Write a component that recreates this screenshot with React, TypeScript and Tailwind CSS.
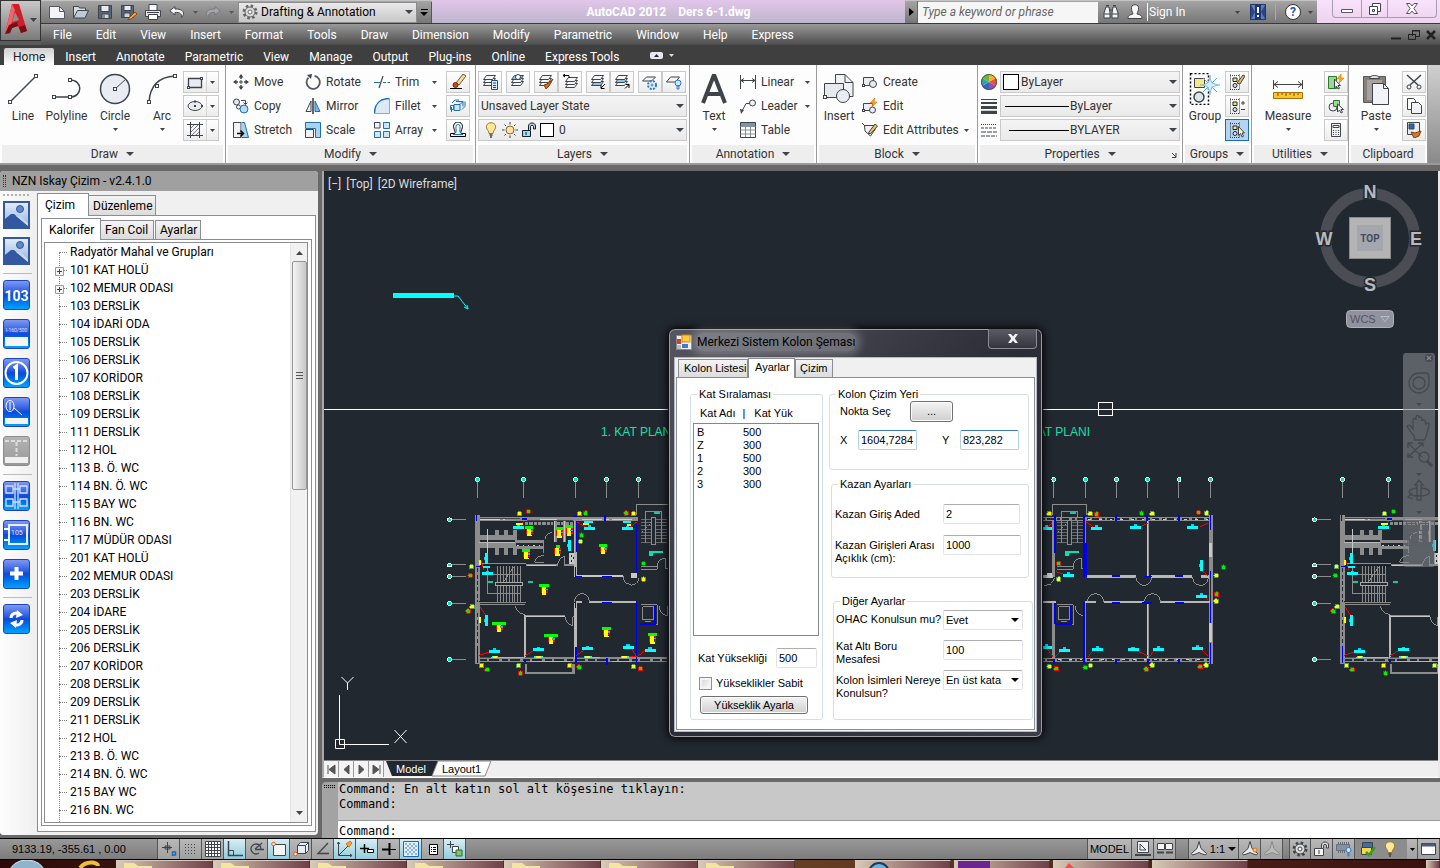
import React, { useState } from 'react'
import type { ReactNode } from 'react'
import clsx from 'clsx'

const menus = ['File', 'Edit', 'View', 'Insert', 'Format', 'Tools', 'Draw', 'Dimension', 'Modify', 'Parametric', 'Window', 'Help', 'Express']
const ribbonTabs = ['Home', 'Insert', 'Annotate', 'Parametric', 'View', 'Manage', 'Output', 'Plug-ins', 'Online', 'Express Tools']

const rooms = [
  'Radyatör Mahal ve Grupları', '101 KAT HOLÜ', '102 MEMUR ODASI', '103 DERSLİK', '104 İDARİ ODA', '105 DERSLİK',
  '106 DERSLİK', '107 KORİDOR', '108 DERSLİK', '109 DERSLİK', '111 DERSLİK', '112 HOL', '113 B. Ö. WC', '114 BN. Ö. WC',
  '115 BAY WC', '116 BN. WC', '117 MÜDÜR ODASI', '201 KAT HOLÜ', '202 MEMUR ODASI', '203 DERSLİK', '204 İDARE',
  '205 DERSLİK', '206 DERSLİK', '207 KORİDOR', '208 DERSLİK', '209 DERSLİK', '211 DERSLİK', '212 HOL', '213 B. Ö. WC',
  '214 BN. Ö. WC', '215 BAY WC', '216 BN. WC',
]

const floors = [
  { name: 'B', height: 500 },
  { name: 'Z', height: 300 },
  { name: '1', height: 500 },
  { name: '2', height: 300 },
  { name: '3', height: 300 },
]

type Kids = { children?: ReactNode }

/* ---------- small drawing helpers ---------- */

function Icon({ w = 16, h = 16, children }: Kids & { w?: number; h?: number }) {
  return (
    <svg width={w} height={h} viewBox={`0 0 ${w} ${h}`} fill="none" stroke="#3f444b" className="shrink-0" aria-hidden="true">
      {children}
    </svg>
  )
}

function Caret({ big, color = '#3f444b' }: { big?: boolean; color?: string }) {
  return big ? (
    <svg width="8" height="4" className="shrink-0" aria-hidden="true"><path d="M0 0h8L4 4z" fill={color} /></svg>
  ) : (
    <svg width="5" height="3" className="shrink-0" aria-hidden="true"><path d="M0 0h5L2.5 3z" fill={color} /></svg>
  )
}

/* ---------- title bar ---------- */

function QuickAccess() {
  return (
    <div className="flex h-full w-[391px] shrink-0 items-center border-t border-[#c4c4c4] bg-linear-to-b from-[#a4a4a4] to-[#777] pl-2">
      <div className="flex items-center gap-2">
        <button aria-label="New"><Icon><path d="M.5 2.500h10l5 5v7H.5z" fill="#f4f4f6" stroke="#55585e" /><path d="M10.500 2.500v5h5" stroke="#55585e" /></Icon></button>
        <button aria-label="Open"><Icon><path d="M.5 14V2.500h5l1 1.500h6v3" fill="#d8dbe2" /><path d="M.5 14l4-7.500h11L12 14z" fill="#c2c9d6" /></Icon></button>
        <button aria-label="Save"><Icon><path d="M1.500 1.500h13v13h-13z" fill="#59637a" /><path d="M4 1.500h8v6H4z" fill="#e8ebf2" /><path d="M5 10h7v4.500H5z" fill="#cfd3dc" /><path d="M7 11v3" /></Icon></button>
        <button aria-label="Save As"><Icon><path d="M.5 1.500h12v12H.5z" fill="#59637a" /><path d="M3 1.500h7v5H3z" fill="#e8ebf2" /><path d="M3 9h6v4.500H3z" fill="#cfd3dc" /><path d="M8 14l6-6 2 2-6 5-3 1z" fill="#f0a83c" stroke="#8a4b10" /></Icon></button>
        <button aria-label="Plot"><Icon><path d="M4 6V.5h8V6" fill="#fff" /><path d="M.5 6.500h15v6H.5z" fill="#e6e6ea" /><path d="M3.500 10.500h9v5h-9z" fill="#fff" /><path d="M2 8.500h12" /></Icon></button>
        <button aria-label="Undo"><Icon><path d="M6 2.500L.8 6.800 6 11V8.500c5-.5 7 1.500 6.500 5 4-4 2-9-6.500-8.500z" fill="#f4f4f6" stroke="#44474d" /></Icon></button>
      </div>
      <span className="ml-2"><Caret color="#55575b" /></span>
      <button aria-label="Redo" className="ml-[7px]"><Icon><path d="M10 2.500l5.200 4.300L10 11V8.500c-5-.5-7 1.500-6.500 5-4-4-2-9 6.500-8.500z" fill="#a6a6a8" stroke="#77797d" /></Icon></button>
      <span className="ml-2"><Caret color="#55575b" /></span>
      <button className="ml-1 flex h-[21px] w-[180px] items-center gap-[3px] border border-[#8d8d8d] bg-linear-to-b from-[#e9e9e9] to-[#c8c8c8] px-[3px]">
        <Icon>
          <circle cx="8" cy="8" r="6" stroke="#666" strokeWidth="3" strokeDasharray="2.400 2.300" />
          <circle cx="8" cy="8" r="5" fill="#ddd" stroke="#666" />
          <circle cx="8" cy="8" r="2" fill="#fff" stroke="#666" />
        </Icon>
        <span className="flex-1 text-left">Drafting &amp; Annotation</span>
        <Caret big />
      </button>
      <button aria-label="Customize" className="flex h-[21px] w-[15px] flex-col items-center justify-center gap-[2px] border-r border-[#555]">
        <span className="h-px w-[7px] bg-black" />
        <Caret big color="#000" />
      </button>
    </div>
  )
}

function InfoCenter() {
  return (
    <div className="flex h-full w-[412px] shrink-0 items-center border-t border-[#c4c4c4] bg-linear-to-b from-[#a4a4a4] to-[#777]">
      <button aria-label="Collapse" className="flex h-full w-[13px] shrink-0 items-center justify-center border-r border-[#666]">
        <svg width="5" height="8"><path d="M0 0v8l5-4z" fill="#000" /></svg>
      </button>
      <input
        aria-label="Search"
        placeholder="Type a keyword or phrase"
        className="h-[21px] w-[180px] shrink-0 bg-[#f6f6f6] px-1 italic outline-none placeholder:text-[#666]"
      />
      <button aria-label="Find" className="ml-[5px]">
        <Icon>
          <path d="M1 14V9l2-6h3l1 6v5zM9 14V9l1-6h3l2 6v5z" fill="#f2f2f2" />
          <path d="M6.500 6h3M1 10h6M9 10h6M3 1.500h3M10 1.500h3" />
        </Icon>
      </button>
      <button aria-label="Account" className="ml-2">
        <Icon><path d="M8 .7c3 0 4 2 3.500 4.800C11 8 10 9 10 10c4 1 5 2 5 4.500H1C1 12 2 11 6 10c0-1-1-2-1.500-4.500C4 2.700 5 .7 8 .7z" fill="#f6f6f6" /></Icon>
      </button>
      <button className="ml-1 border-l border-white pl-px whitespace-nowrap text-white">Sign In</button>
      <span className="ml-auto"><Caret color="#3f444b" /></span>
      <button aria-label="Exchange" className="ml-[10px]">
        <Icon><path d="M.5 .5h15v15H.5z" fill="#5b7fc8" stroke="#27365e" /><path d="M1 1l4 7-4 7M15 1l-4 7 4 7" fill="#2b4688" stroke="none" /><path d="M5 1h6v14H5z" fill="#20356e" stroke="none" /><path d="M7 3h2v6H7zM7 11h2v2H7z" fill="#fff" stroke="none" /></Icon>
      </button>
      <span className="mx-[9px] h-4 w-px bg-[#aaa]" />
      <button aria-label="Help" className="flex size-4 shrink-0 items-center justify-center rounded-full border border-[#333] bg-white text-[12px] font-bold text-[#2455a8]">?</button>
      <span className="mr-1 ml-[7px]"><Caret color="#3f444b" /></span>
    </div>
  )
}

function TitleBar() {
  return (
    <div className="flex h-6 border-b border-[#3a3a3a]">
      <QuickAccess />
      <div className="flex min-w-0 flex-1 items-center justify-center gap-3 overflow-hidden bg-linear-to-b from-[#e2c6ea] to-[#bdb5cd] font-bold whitespace-nowrap text-white">
        <span>AutoCAD 2012</span>
        <span>Ders 6-1.dwg</span>
      </div>
      <InfoCenter />
      <div className="flex w-[123px] shrink-0 justify-end bg-linear-to-b from-[#f9e2fb] to-[#ecd3ee] pr-[3px]">
        <div className="flex h-[18px] divide-x divide-[#a79bb0] rounded-b-[4px] border-x border-b border-[#a79bb0]">
          <button aria-label="Minimize" className="flex w-[29px] items-center justify-center"><Icon w={14} h={12}><path d="M1.500 6.500h11v3h-11z" fill="#fff" stroke="#55566a" /></Icon></button>
          <button aria-label="Restore" className="flex w-[26px] items-center justify-center"><Icon w={12} h={12}><path d="M3.500 .5h8v8h-8z" fill="#fff" /><path d="M.5 3.500h8v8h-8z" fill="#fff" /><path d="M3.500 6.500h2v2h-2z" /></Icon></button>
          <button aria-label="Close" className="flex w-12 items-center justify-center"><Icon w={12} h={11}><path d="M.5 .5h3.500l2 2.500 2-2.500h3.500l-3.600 5 3.600 5H8l-2-2.500-2 2.500H.5l3.600-5z" fill="#fff" stroke="#55566a" /></Icon></button>
        </div>
      </div>
    </div>
  )
}

function Header() {
  return (
    <header className="flex bg-[#5a5a5a]">
      <button aria-label="Application menu" className="h-[41px] w-[41px] shrink-0 border border-[#333] bg-linear-to-b from-[#c9c9c9] to-[#7b7b7b]">
        <svg width="39" height="39" viewBox="0 0 39 39" aria-hidden="true">
          <path d="M4 33L11 3h7l8 27-6 2-3-7-6 2-2 5z" fill="#cf1e28" />
          <path d="M11 21l3-10 4 8z" fill="#8d8d8d" />
          <path d="M11 3L4 33l4-2 6-22z" fill="#f2636a" />
          <path d="M4 33l5-1 2-5 6-2-1-4-8 3zM20 32l6-2-2-6-6 2z" fill="#7a0c14" />
          <path d="M29 17h7l-3.500 4z" fill="#3f444b" />
        </svg>
      </button>
      <div className="min-w-0 flex-1">
        <TitleBar />
        <div className="flex h-[21px] items-center bg-linear-to-b from-[#9a9a9a] to-[#4d4d4d] pr-1 pl-3 text-white">
          <nav className="flex gap-6">
            {menus.map((m) => <button key={m}>{m}</button>)}
          </nav>
          <div className="ml-auto flex gap-[6px]">
            <button aria-label="Minimize drawing"><Icon w={12} h={12}><path d="M1 9.500h10" stroke="#222" strokeWidth="2" /></Icon></button>
            <button aria-label="Restore drawing"><Icon w={12} h={12}><path d="M4.500 7V1.500h7v6H8M.5 5.500h7v5h-7z" stroke="#222" /><path d="M4 2h8M0 5.500h8" stroke="#222" /></Icon></button>
            <button aria-label="Close drawing"><Icon w={10} h={12}><path d="M1 2l8 8M9 2l-8 8" stroke="#222" strokeWidth="2.500" /></Icon></button>
          </div>
        </div>
      </div>
    </header>
  )
}

/* ---------- ribbon ---------- */

function Panel({ title, width, arrow = true, launcher, children }: Kids & { title: string; width: string; arrow?: boolean; launcher?: boolean }) {
  return (
    <section className={clsx('flex shrink-0 flex-col border-r border-[#9a9a9a] px-[2px] text-[#333]', width)}>
      <div className="flex h-20 items-start pt-[5px]">{children}</div>
      <div className="relative flex h-[18px] items-center justify-center gap-2 bg-[#eee]">
        {title}
        {arrow && <Caret big />}
        {launcher && (
          <button aria-label={`${title} settings`} className="absolute right-[3px] bottom-[5px]">
            <Icon w={6} h={6}><path d="M1 1l4 4M5 1v4.500H1" /></Icon>
          </button>
        )}
      </div>
    </section>
  )
}

function BigButton({ label, width, arrow, children }: Kids & { label: string; width: string; arrow?: boolean }) {
  return (
    <button className={clsx('flex shrink-0 flex-col items-center', width)}>
      <span className="flex h-[38px] items-center justify-center">{children}</span>
      <span className="leading-4">{label}</span>
      {arrow && <span className="mt-1"><Caret /></span>}
    </button>
  )
}

function RowButton({ label, arrow, children }: Kids & { label: string; arrow?: boolean }) {
  return (
    <button className="flex h-6 items-center gap-[5px] text-left whitespace-nowrap">
      {children}
      <span className={clsx(arrow && 'flex-1')}>{label}</span>
      {arrow && <Caret />}
    </button>
  )
}

function Stack({ className, children }: Kids & { className?: string }) {
  return <div className={clsx('mt-px flex flex-col gap-[2px]', className)}>{children}</div>
}

function Mini({ label, on, split, children }: Kids & { label: string; on?: boolean; split?: boolean }) {
  return (
    <div className={clsx('flex h-[22px] border', on ? 'border-[#1b6ac0] bg-[#b4d4f2]' : 'border-[#c9c9c9] bg-linear-to-b from-white to-[#ececec]')}>
      <button aria-label={label} className="flex w-[22px] items-center justify-center">{children}</button>
      {split && <button aria-label={`${label} options`} className="flex w-3 items-center justify-center border-l border-[#d4d4d4]"><Caret /></button>}
    </div>
  )
}

function Combo({ label, value, pad, width, children }: Kids & { label: string; value: string; pad: string; width: string }) {
  return (
    <div className={clsx('relative h-[22px] border border-[#c9c9c9] bg-linear-to-b from-[#f4f4f4] to-[#eaeaea]', width)}>
      <select aria-label={label} className={clsx('h-full w-full appearance-none outline-none', pad)}>
        <option>{value}</option>
      </select>
      <span className="pointer-events-none absolute inset-y-0 left-1 flex items-center gap-[3px]">{children}</span>
      <span className="pointer-events-none absolute top-2 right-[2px]"><Caret big /></span>
    </div>
  )
}

const node = { fill: '#fff', stroke: '#3f444b' }

function DrawPanel() {
  return (
    <Panel title="Draw" width="w-[226px]">
      <BigButton label="Line" width="w-[42px]">
        <Icon w={32} h={32}><path d="M3 29L29 3" strokeWidth="1.500" /><rect x="1.500" y="27.500" width="3" height="3" {...node} /><rect x="27.500" y="1.500" width="3" height="3" {...node} /></Icon>
      </BigButton>
      <BigButton label="Polyline" width="w-[45px]">
        <Icon w={32} h={32}><path d="M3 24h16c13 0 13-17 0-17" strokeWidth="1.500" /><rect x="1.500" y="22.500" width="3" height="3" {...node} /><rect x="17.500" y="22.500" width="3" height="3" {...node} /><rect x="17.500" y="5.500" width="3" height="3" {...node} /></Icon>
      </BigButton>
      <BigButton label="Circle" width="w-[52px]" arrow>
        <Icon w={32} h={32}><circle cx="16" cy="16" r="14.500" fill="#e9edf3" strokeWidth="1.500" /><path d="M16 16L27 6" /><rect x="14.500" y="14.500" width="3" height="3" {...node} /></Icon>
      </BigButton>
      <BigButton label="Arc" width="w-[42px]" arrow>
        <Icon w={32} h={32}><path d="M3 29C4 13 12 4 29 3" strokeWidth="1.500" /><rect x="1.500" y="27.500" width="3" height="3" {...node} /><rect x="9.500" y="11.500" width="3" height="3" {...node} /><rect x="27.500" y="1.500" width="3" height="3" {...node} /></Icon>
      </BigButton>
      <Stack>
        <Mini label="Rectangle" split><Icon><path d="M1.500 4.500h13v9h-13z" fill="#e9edf3" strokeWidth="1.300" /><rect x=".5" y="12.500" width="2" height="2" {...node} /><rect x="13.500" y="3.500" width="2" height="2" {...node} /></Icon></Mini>
        <Mini label="Ellipse" split><Icon><ellipse cx="8" cy="8" rx="7" ry="4.500" fill="#e9edf3" /><path d="M7 8h2M8 7v2M8 2.500v2M14 8h2" strokeWidth="2" /></Icon></Mini>
        <Mini label="Hatch" split><Icon><path d="M3.500 0v16M12.500 0v16M0 2.500h16M0 13.500h16" /><path d="M4 6l3-3M4 10l7-7M5 13l7-7M9 13l3-3" strokeWidth=".7" /></Icon></Mini>
      </Stack>
    </Panel>
  )
}

function ModifyPanel() {
  const blue = '#1f6fb5'
  return (
    <Panel title="Modify" width="w-[250px]">
      <div className="ml-[5px] w-[72px]">
        <RowButton label="Move"><Icon><path d="M8 1v4M8 11v4M1 8h4M11 8h4" strokeWidth="1.500" /><path d="M5.500 3.500L8 0l2.500 3.500zM5.500 12.500L8 16l2.500-3.500zM3.500 5.500L0 8l3.500 2.500zM12.500 5.500L16 8l-3.500 2.500z" fill="#3f444b" stroke="none" /><path d="M7 7h2v2H7z" fill="#fff" /></Icon></RowButton>
        <RowButton label="Copy"><Icon><circle cx="3.500" cy="4" r="3" fill="#e6e8ee" /><circle cx="5.500" cy="9" r="2" fill="#fff" /><circle cx="11" cy="11" r="4" fill="#b9d9f2" stroke={blue} /><path d="M8 2.500h4.500V6M10.500 4.500l2 2 2-2" /></Icon></RowButton>
        <RowButton label="Stretch"><Icon><path d="M.5 .5H8v15H.5z" fill="#f1f2f5" /><path d="M8.500 .5h3l4 15h-7" fill="#a9d2f0" stroke={blue} /><path d="M4 11.500h6M7.500 8.500l3 3-3 3" strokeWidth="1.500" stroke="#000" /></Icon></RowButton>
      </div>
      <div className="w-[69px]">
        <RowButton label="Rotate"><Icon><path d="M9.500 1.800a6.600 6.600 0 1 1-6 1.800" strokeWidth="1.800" stroke="#55595f" /><path d="M2 1l5-1-1 5z" fill="#3f444b" stroke="none" /></Icon></RowButton>
        <RowButton label="Mirror"><Icon><path d="M6 3v10.500H1z" fill="#f1f2f5" /><path d="M10 3v10.500h5z" fill="#7fb8e6" stroke={blue} /><path d="M8 0v16" strokeWidth="1.200" stroke="#000" /></Icon></RowButton>
        <RowButton label="Scale"><Icon><path d="M.5 .5h15v15h-5v-9h-10z" fill="#a9d2f0" stroke={blue} /><path d="M.5 7.500h8v8h-8z" fill="#f1f2f5" /></Icon></RowButton>
      </div>
      <div className="flex w-[63px] flex-col">
        <RowButton label="Trim" arrow><Icon><path d="M0 8.500h6" stroke={blue} /><path d="M5 14l4-12" strokeWidth="1.200" /><path d="M9 8.500h7" stroke={blue} strokeDasharray="3 1.500" /></Icon></RowButton>
        <RowButton label="Fillet" arrow><Icon><path d="M.5 15.500C.5 6 6 .5 15.500 .5v15z" fill="#dbeaf6" stroke="none" /><path d="M.5 15.500C.5 6 6 .5 15.500 .5" stroke={blue} strokeWidth="1.500" /><path d="M.5 15.500h15V.5" stroke="#9aa" /></Icon></RowButton>
        <RowButton label="Array" arrow><Icon><path d="M.5 .5h5.500v5.500H.5z" fill="#f1f2f5" /><path d="M9.500 .5h6v6h-6zM.5 9.500h6v6h-6zM9.500 9.500h6v6h-6z" fill="#cfe5f6" stroke={blue} /></Icon></RowButton>
      </div>
      <Stack className="ml-[9px]">
        <Mini label="Erase"><Icon><path d="M6 9l7-9 3 2-7 9z" fill="#f0d9a8" stroke="#7a5a2a" /><circle cx="5.500" cy="11" r="2.500" fill="#c8481c" stroke="#7a2a10" /><path d="M0 14.500h12" stroke="#000" /></Icon></Mini>
        <Mini label="Explode"><Icon><path d="M4 6.500h6v6H4zM6 3.500h7v5M10 6.500l3-3" fill="#cfe5f6" stroke={blue} /><path d="M1.500 9v5M12 11.500l3-3v-5M2 5l3-3h4M.5 7.500h3v4h-3z" stroke={blue} /></Icon></Mini>
        <Mini label="Offset"><Icon><path d="M.5 14.500v-3h4c2 0-1-5-1-7a4.500 4.500 0 0 1 9 0c0 2-3 7-1 7h4v3z" stroke="#000" /><path d="M3 12.500h10M5.500 11c1.500-2 0-4 .5-6.500a2 2 0 0 1 4 0C10.500 7 9 9 10.500 11" stroke={blue} /></Icon></Mini>
      </Stack>
    </Panel>
  )
}

function Sheets({ blue }: { blue?: number }) {
  return (
    <>
      {[9.5, 6.5, 3.5].map((y, i) => (
        <path key={y} d={`M1.500 ${y + 2}l3-4h9l-3 4z`} fill={blue === i ? '#8cc4ee' : '#f4f5f7'} />
      ))}
    </>
  )
}

function LayersPanel() {
  return (
    <Panel title="Layers" width="w-[214px]">
      <Stack>
        <div className="flex">
          <div className="mr-1"><Mini label="Layer Properties"><Icon><Sheets /><path d="M9.500 6.500h6v9h-6z" fill="#dcebf8" stroke="#23507a" /><path d="M11 9h3M11 11.500h3M11 13.500h3" /></Icon></Mini></div>
          <div className="mr-1"><Mini label="Make Current"><Icon><Sheets blue={2} /><circle cx="8" cy="3" r="2.500" fill="#fff" /></Icon></Mini></div>
          <Mini label="Match"><Icon><Sheets /><path d="M6 11l3-1 6-5-4 7-3 3z" fill="#c86a22" stroke="#84400f" /></Icon></Mini>
          <div className="mr-1"><Mini label="Previous"><Icon><g transform="translate(2 2)"><Sheets /></g><path d="M7 4V1.500H1M3 0L1 1.500 3 3" stroke="#000" /></Icon></Mini></div>
          <Mini label="Isolate"><Icon><Sheets blue={0} /><path d="M15 10l-4 4M11 11v3.500h3.500" stroke="#000" /></Icon></Mini>
          <div className="mr-1"><Mini label="Unisolate"><Icon><Sheets blue={1} /><path d="M11 14.500l4-4M12 10.500h3V14" stroke="#000" /></Icon></Mini></div>
          <Mini label="Freeze"><Icon><path d="M.5 7l4-4h9l-4 4z" fill="#f4f5f7" /><circle cx="10" cy="11" r="4" stroke="#2a7cc4" strokeWidth="2" strokeDasharray="2 1.200" /><circle cx="10" cy="11" r="1" stroke="#2a7cc4" /></Icon></Mini>
          <Mini label="Off"><Icon><path d="M.5 8l4-5h9l-4 5z" fill="#f4f5f7" /><circle cx="12" cy="9" r="3" fill="#cfe5f6" stroke="#2a7cc4" /><path d="M11 12h2v3h-2z" stroke="#2a7cc4" /></Icon></Mini>
        </div>
        <Combo label="Layer state" value="Unsaved Layer State" pad="pl-[2px]" width="w-[209px]" />
        <Combo label="Layer" value="0" pad="pl-20" width="w-[209px]">
          <Icon><path d="M8 .8c3.500 0 5 2.500 4.500 5C12 8 10 9 10 11.500H6C6 9 4 8 3.500 5.800 3 3.300 4.500 .8 8 .8z" fill="#ffe79a" stroke="#9a7a2a" /><path d="M6.500 13h3M7 15h2" strokeWidth="1.500" /></Icon>
          <Icon><circle cx="8" cy="8" r="4" fill="#ffe0a0" stroke="#8a6a3a" /><path d="M8 0v2.500M8 13.500V16M0 8h2.500M13.500 8H16M2.500 2.500l1.500 1.500M12 12l1.500 1.500M13.500 2.500L12 4M2.500 13.500L4 12" /></Icon>
          <Icon><path d="M1.500 8.500h8v6h-8z" fill="#a9d8f0" stroke="#123" /><path d="M7.500 8V4c0-4 7-4 7 0v3h-2V4.500c0-1.500-3-1.500-3 0V8" fill="#bcd" stroke="#123" /><path d="M5 10v3" stroke="#123" /></Icon>
          <span className="size-[14px] border border-black bg-white" />
        </Combo>
      </Stack>
    </Panel>
  )
}

function AnnotationPanel() {
  return (
    <Panel title="Annotation" width="w-[127px]">
      <BigButton label="Text" width="w-11" arrow>
        <Icon w={28} h={32}><path d="M3 30L13.500 3h1L25 30M7 21h14" strokeWidth="4" /></Icon>
      </BigButton>
      <div className="ml-1 flex w-[70px] flex-col">
        <RowButton label="Linear" arrow><Icon><path d="M.5 1v14M15.500 1v14M1 6.500h14M4 4.500l-3 2 3 2M12 4.500l3 2-3 2" /></Icon></RowButton>
        <RowButton label="Leader" arrow><Icon><circle cx="12.500" cy="5" r="3" fill="#f1f2f5" /><path d="M9 5.500H6L2 13" /><path d="M0 11l4 1-3 4z" fill="#3f444b" stroke="none" /></Icon></RowButton>
        <RowButton label="Table"><Icon><path d="M.5 .5h15v15H.5z" fill="#fff" /><path d="M1 1h14v3H1z" fill="#7b93b5" stroke="none" /><path d="M.5 4.500h15M.5 8h15M.5 12h15M5.500 4v11M10.500 4v11" stroke="#88909a" /></Icon></RowButton>
      </div>
    </Panel>
  )
}

function BlockPanel() {
  return (
    <Panel title="Block" width="w-[161px]">
      <BigButton label="Insert" width="w-[40px]">
        <Icon w={32} h={32}>
          <path d="M12.500 1.500H22l8 8v14H12.500z" fill="#f1f2f5" />
          <path d="M22 1.500v8h8" />
          <path d="M1.500 10.500h19v14h-19z" fill="#e6e9ef" />
          <circle cx="20" cy="23" r="6.500" fill="#e9ecf2" />
          <rect x=".5" y="22.500" width="3" height="3" {...node} />
        </Icon>
      </BigButton>
      <div className="ml-[3px] w-[110px]">
        <RowButton label="Create"><Icon><path d="M1.500 3.500h10v8h-10z" fill="#e9edf3" /><circle cx="11" cy="10" r="3.500" fill="#e9edf3" /><rect x=".5" y="10.500" width="2" height="2" {...node} /></Icon></RowButton>
        <RowButton label="Edit"><Icon><path d="M1.500 5.500h9v7h-9z" fill="#e9edf3" /><circle cx="10.500" cy="12" r="3" fill="#e9edf3" /><rect x=".5" y="11.500" width="2" height="2" {...node} /><path d="M13 0L8 5h3l-1 4 5-5h-3z" fill="#f7a823" stroke="#d9740f" strokeWidth=".6" /></Icon></RowButton>
        <RowButton label="Edit Attributes" arrow><Icon><path d="M0 1l3 3M2.500 3.500H12l1 4-4.500 6.500L3 9z" fill="#f1f2f5" /><path d="M7 10l6-8 2.500 2-6 7-3 1z" fill="#f0c060" /></Icon></RowButton>
      </div>
    </Panel>
  )
}

function PropertiesPanel() {
  return (
    <Panel title="Properties" width="w-[205px]" launcher>
      <div className="ml-px flex w-[19px] flex-col">
        <span className="flex h-6 items-center">
          <Icon>
            <g stroke="none">
              <path d="M8 8V0a8 8 0 0 1 7 4z" fill="#f2b43a" />
              <path d="M8 8l7-4a8 8 0 0 1 0 8z" fill="#e8543a" />
              <path d="M8 8l7 4a8 8 0 0 1-7 4z" fill="#a04ab0" />
              <path d="M8 8v8a8 8 0 0 1-7-4z" fill="#3a62c4" />
              <path d="M8 8l-7 4a8 8 0 0 1 0-8z" fill="#3aa0a8" />
              <path d="M8 8L1 4a8 8 0 0 1 7-4z" fill="#6ab83a" />
            </g>
            <circle cx="8" cy="8" r="7.500" stroke="#555" />
          </Icon>
        </span>
        <span className="flex h-6 items-center"><Icon><path d="M0 1.500h16" /><path d="M0 5h16" strokeWidth="2" /><path d="M0 9.500h16" strokeWidth="3" /><path d="M0 14.500h16" strokeWidth="3.500" /></Icon></span>
        <span className="flex h-6 items-center"><Icon><path d="M0 2.500h16" strokeDasharray="1 1" /><path d="M0 6h16" strokeDasharray="3 1" /><path d="M0 10h16" strokeDasharray="5 1" /><path d="M0 14h16" strokeDasharray="4 1" /></Icon></span>
      </div>
      <Stack>
        <Combo label="Color" value="ByLayer" pad="pl-[20px]" width="w-[180px]"><span className="-ml-[2px] size-4 border border-black bg-white" /></Combo>
        <Combo label="Lineweight" value="ByLayer" pad="pl-[69px]" width="w-[180px]"><span className="h-px w-16 bg-black" /></Combo>
        <Combo label="Linetype" value="BYLAYER" pad="pl-[69px]" width="w-[180px]"><span className="ml-1 h-px w-[60px] bg-black" /></Combo>
      </Stack>
    </Panel>
  )
}

function GroupGlyph() {
  return (
    <>
      <path d="M1.500 .5v15M10.500 .5v15M1 1.500h10M1 15.500h10" strokeDasharray="1 1" />
      <path d="M4 4h4v3.500H4z" fill="#f6e98a" stroke="#222" />
      <circle cx="6" cy="11.500" r="2" fill="#cfe5f6" stroke="#222" />
    </>
  )
}

function RightPanels() {
  return (
    <>
      <Panel title="Groups" width="w-[69px]">
        <BigButton label="Group" width="w-10">
          <Icon w={32} h={32}>
            <path d="M1.500 .5h18v31h-18z" strokeDasharray="2 2" stroke="#000" strokeWidth="1.500" />
            <path d="M5.500 5.500h10v9h-10z" fill="#f6e98a" />
            <circle cx="10" cy="24" r="5" fill="#dfe4ea" strokeWidth="1.500" />
            <path d="M21 2v20M11 12h20M14 5l14 14M28 5L14 19" stroke="#5aa6e0" />
            <path d="M21 5l2 5 6 2-6 2-2 6-2-6-5-2 5-2z" fill="#d8eefc" stroke="#7cc0f0" />
          </Icon>
        </BigButton>
        <Stack>
          <Mini label="Ungroup"><Icon><GroupGlyph /><path d="M8 9l6-8 2 1-5 8z" fill="#e8b85a" /></Icon></Mini>
          <Mini label="Group Edit"><Icon><GroupGlyph /><path d="M12 5h4M14 3v4M12 11.500h4" /></Icon></Mini>
          <Mini label="Group Selection" on><Icon><GroupGlyph /><path d="M9.500 4.500v9l2-2 1.500 3.500 1.500-.7-1.500-3.300h2.500z" fill="#fff7b0" /></Icon></Mini>
        </Stack>
      </Panel>
      <Panel title="Utilities" width="w-[97px]">
        <BigButton label="Measure" width="w-[68px]" arrow>
          <Icon w={32} h={32}>
            <path d="M1.500 7v9M30.500 7v9M2 11.500h28M6 8.500l-4 3 4 3M26 8.500l4 3-4 3" />
            <path d="M1.500 19.500h29v6h-29z" fill="#f7c52c" stroke="#a8700c" />
            <path d="M6 20v3M10 20v2M14 20v3M18 20v2M22 20v3M26 20v2" stroke="#7a5206" />
          </Icon>
        </BigButton>
        <Stack className="ml-[2px]">
          <Mini label="Quick Select"><Icon><path d="M.5 2.500h8v12h-8z" fill="#9fd49a" stroke="#2a7a2a" /><path d="M13 0L9 5h3l-1 4 5-5h-3z" fill="#f7a823" stroke="#d9740f" strokeWidth=".6" /><path d="M6.500 5v9l2-2 1.500 3 1.500-.7L10 11.500h2.500z" fill="#fff" /></Icon></Mini>
          <Mini label="Select All"><Icon><circle cx="5" cy="9" r="4" fill="#eee" /><path d="M5.500 2.500h6v6h-6z" fill="#9fd49a" stroke="#2a7a2a" /><path d="M9.500 6v8l2-2 1.500 3 1.500-.7L13 11.500h2.500z" fill="#fff" /></Icon></Mini>
          <Mini label="Calculator"><Icon><path d="M3.500 1.500h9v13h-9z" fill="#f1f2f5" /><path d="M5 3.500h6v2H5z" fill="#fff" /><path d="M5 8.500h6M5 10.500h6M5 12.500h6" strokeDasharray="1 1.500" /></Icon></Mini>
        </Stack>
      </Panel>
      <Panel title="Clipboard" width="w-[79px]" arrow={false}>
        <BigButton label="Paste" width="w-[50px]" arrow>
          <Icon w={32} h={32}>
            <path d="M3.500 3.500h22v26h-22z" fill="#86807c" stroke="#5a5654" />
            <path d="M7 7h15v20H7z" fill="#a8a29e" stroke="none" />
            <path d="M9.500 5.500c0-4 10-4 10 0z" fill="#e8e8ea" />
            <path d="M12.500 10.500h11l5 5v16h-16z" fill="#f0f3f8" />
            <path d="M23.500 10.500v5h5" />
          </Icon>
        </BigButton>
        <Stack className="ml-px">
          <Mini label="Cut"><Icon><path d="M1 1l11 10M15 1L4 11" strokeWidth="1.500" /><circle cx="3" cy="13" r="2" /><circle cx="13" cy="13" r="2" /></Icon></Mini>
          <Mini label="Copy Clip"><Icon><path d="M1.500 .5h6l2 2v9h-8z" fill="#fff" /><path d="M5.500 4.500h7l3 3v8h-10z" fill="#f1f2f5" /></Icon></Mini>
          <Mini label="Match Properties"><Icon><path d="M1.500 .5h12v12h-12z" fill="#e9edf3" /><path d="M3 2h5v5H3z" fill="#2f69b0" /><path d="M5 10l4 1 6-2-2 5-5 2z" fill="#d9772a" stroke="#84400f" /></Icon></Mini>
        </Stack>
      </Panel>
    </>
  )
}

function Ribbon() {
  const [active, setActive] = useState('Home')
  return (
    <div className="bg-[#3f3f3f]">
      <div className="flex h-5 items-end gap-[2px] pl-1">
        {ribbonTabs.map((t) => (
          <button
            key={t}
            onClick={() => setActive(t)}
            className={clsx('h-[17px] px-[9px] leading-4', t === active ? 'rounded-t-[2px] bg-linear-to-b from-[#cfcfcf] to-white text-[#222]' : 'text-white')}
          >
            {t}
          </button>
        ))}
        <button aria-label="Minimize ribbon" className="mb-[6px] ml-5 flex items-center gap-[6px]">
          <Icon w={13} h={7}><rect width="13" height="7" rx="2" fill="#e8e8f0" stroke="none" /><path d="M4 5h5L6.500 2z" fill="#222" stroke="none" /></Icon>
          <Caret color="#ddd" />
        </button>
      </div>
      <div className="flex overflow-hidden border-b-2 border-[#9a9a9a] bg-[#fdfdfd]">
        <DrawPanel />
        <ModifyPanel />
        <LayersPanel />
        <AnnotationPanel />
        <BlockPanel />
        <PropertiesPanel />
        <RightPanels />
        <div className="flex-1 bg-linear-to-b from-[#d0d0d0] to-[#8a8a8a]" />
      </div>
    </div>
  )
}

/* ---------- side palette ---------- */

function Tile({ label, grey, children }: Kids & { label: string; grey?: boolean }) {
  return (
    <button
      aria-label={label}
      className={clsx(
        'h-[30px] w-[27px] overflow-hidden rounded-[3px] border',
        grey ? 'border-[#8c8c8c] bg-linear-to-b from-[#b4b4b4] to-[#989898]' : 'border-[#1d44b8] bg-linear-to-b from-[#7f97f2] via-[#0f49dc] to-[#00a2ff]',
      )}
    >
      <svg width="25" height="28" viewBox="0 0 25 28" fill="none" stroke="#fff" strokeWidth="2">{children}</svg>
    </button>
  )
}

function Photo({ label }: { label: string }) {
  return (
    <button aria-label={label} className="h-7 w-[27px]">
      <svg width="27" height="28" viewBox="0 0 27 28">
        <defs>
          <linearGradient id="sky" x1="0" y1="0" x2="0" y2="1"><stop offset="0" stopColor="#e4eefa" /><stop offset="1" stopColor="#8fb0dc" /></linearGradient>
        </defs>
        <rect x="1" y="1" width="25" height="26" fill="url(#sky)" stroke="#33589f" strokeWidth="2" />
        <path d="M2 18l6-5h3l6 5 8 7v1H2z" fill="#33589f" />
        <path d="M13 15l4 0 8 7v3z" fill="#c7d8f0" />
        <circle cx="17" cy="8" r="3.500" fill="#5f88c8" stroke="#33589f" />
      </svg>
    </button>
  )
}

function IconStrip() {
  return (
    <div className="flex w-[37px] shrink-0 flex-col bg-linear-to-r from-[#fdfdfd] to-[#efefef] pt-[3px] pl-[3px]">
      <div className="w-[26px] border-t-2 border-dotted border-[#b0b0b0]" />
      <div className="mt-[5px] flex flex-col gap-2">
        <Photo label="Resim 1" />
        <Photo label="Resim 2" />
      </div>
      <hr className="mt-2 w-[29px] border-t border-[#bbb]" />
      <div className="mt-[6px] flex flex-col gap-[9px]">
        <Tile label="103"><text x="12.500" y="20" textAnchor="middle" fill="#fff" stroke="none" fontSize="14" fontWeight="700" fontFamily="Roboto">103</text></Tile>
        <Tile label="160/500"><text x="12.500" y="12" textAnchor="middle" fill="#dbe6ff" stroke="none" fontSize="5" fontFamily="Roboto">I-160/500</text><path d="M1 17h23v9H1z" fill="#f4f4f4" stroke="none" /></Tile>
        <Tile label="Kolon no"><circle cx="12.500" cy="14" r="11" /><path d="M9.500 9l3-2v14" strokeWidth="3" /></Tile>
        <Tile label="Kolon hattı"><ellipse cx="6" cy="8" rx="4" ry="5.500" strokeWidth="1" /><path d="M6 4v8M10 10l8 7" strokeWidth="1" /><path d="M1 20h23v6H1z" fill="#f4f4f4" stroke="none" /></Tile>
        <Tile label="Boru" grey><path d="M1 4h23M12.500 5v14" strokeDasharray="4 2" stroke="#ddd" /><path d="M1 20h23v6H1z" fill="#f0f0f0" stroke="none" /></Tile>
      </div>
      <hr className="mt-2 w-[29px] border-t border-[#bbb]" />
      <div className="mt-[6px] flex flex-col gap-[9px]">
        <Tile label="Şema"><path d="M2 4h7v7H2zM16 4h7v7h-7zM2 17h7v7H2zM16 17h7v7h-7zM11 1v26M14 1v26M9 7h7M9 20h7" strokeWidth="1.300" stroke="#cfe0ff" /></Tile>
        <Tile label="Mahal"><path d="M5 4h18v19H5z" stroke="#e6efff" /><path d="M0 8h5M0 19h5" /><text x="7" y="14" fill="#dbe6ff" stroke="none" fontSize="7" fontFamily="Roboto">105</text></Tile>
        <Tile label="Ekle"><path d="M12.500 7v13M6 13.500h13" strokeWidth="4" /></Tile>
      </div>
      <hr className="mt-2 w-[29px] border-t border-[#bbb]" />
      <div className="mt-[6px]">
        <Tile label="Yenile">
          <path d="M7 13c0-5 6-6 8-4M18 15c0 5-6 6-8 4" strokeWidth="3" />
          <path d="M13 5l6 5-7 3zM12 23l-6-5 7-3z" fill="#fff" stroke="none" />
        </Tile>
      </div>
    </div>
  )
}

const tabOn = 'relative z-10 -mb-px border border-b-0 border-[#8b8d96] bg-white text-left'
const tabOff = 'border border-b-0 border-[#8b8d96] bg-linear-to-b from-[#f4f4f4] to-[#dcdcdc] text-left'

function Palette() {
  return (
    <aside className="mt-[6px] mb-[3px] flex w-[318px] shrink-0 flex-col overflow-hidden rounded-[4px] bg-[#f0f0f0] text-black">
      <div className="flex h-5 shrink-0 items-center gap-[6px] bg-[#a0a0a0] pl-[3px]">
        <span className="h-3 w-[3px] border-x border-dotted border-[#333]" />
        NZN Iskay Çizim - v2.4.1.0
      </div>
      <div className="flex min-h-0 flex-1">
        <IconStrip />
        <div className="flex min-w-0 flex-1 flex-col pt-[2px] pr-[2px] pb-[3px]">
          <div className="flex items-end">
            <button className={clsx(tabOn, 'h-[23px] w-[52px] pl-[7px]')}>Çizim</button>
            <button className={clsx(tabOff, 'h-5 w-[67px] border-l-0 pl-1')}>Düzenleme</button>
          </div>
          <div className="flex min-h-0 flex-1 flex-col border border-[#8b8d96] bg-white px-[3px] pt-[2px] pb-[5px]">
            <div className="flex items-end">
              <button className={clsx(tabOn, 'h-[22px] w-[60px] pl-[7px]')}>Kalorifer</button>
              <button className={clsx(tabOff, 'h-[19px] w-[53px] border-l-0 pl-1')}>Fan Coil</button>
              <button className={clsx(tabOff, 'ml-px h-[19px] w-[46px] pl-1')}>Ayarlar</button>
            </div>
            <div className="flex min-h-0 flex-1 border border-[#8b8d96] py-[2px] pr-[3px] pl-[2px]">
              <div className="flex min-h-0 flex-1 overflow-hidden border border-[#8b8d96]">
                <ul className="relative flex-1">
                  <li className="absolute top-[10px] bottom-0 left-[14px] border-l border-dotted border-[#888]" aria-hidden="true" />
                  {rooms.map((r, i) => (
                    <li key={r} className="relative flex h-[18px] items-center pl-[14px] whitespace-nowrap">
                      <span className="mr-[3px] w-2 border-t border-dotted border-[#888]" />
                      {(i === 1 || i === 2) && (
                        <button aria-label={`${r} aç`} className="absolute top-[6px] left-[10px] bg-white">
                          <svg width="9" height="9" className="block"><path d="M.5 .5h8v8h-8z" fill="#f4f4f4" stroke="#999" /><path d="M2 4.500h5M4.500 2v5" stroke="#2b3f8c" /></svg>
                        </button>
                      )}
                      {r}
                    </li>
                  ))}
                </ul>
                <div className="flex w-[17px] flex-col items-center justify-between border-l border-[#e6e6e6] bg-[#f1f1f1] pb-[7px]">
                  <div className="flex w-full flex-col items-center pt-2">
                    <svg width="7" height="4"><path d="M0 4h7L3.500 0z" fill="#444" /></svg>
                    <div className="mt-[6px] flex h-[229px] w-[15px] flex-col items-center justify-center gap-px rounded-[2px] border border-[#979797] bg-linear-to-r from-[#f5f5f5] to-[#c8c8c8]">
                      <span className="h-px w-[7px] bg-[#555]" />
                      <span className="mt-px h-px w-[7px] bg-[#555]" />
                      <span className="mt-px h-px w-[7px] bg-[#555]" />
                    </div>
                  </div>
                  <svg width="7" height="4"><path d="M0 0h7L3.500 4z" fill="#444" /></svg>
                </div>
              </div>
            </div>
          </div>
        </div>
      </div>
    </aside>
  )
}

/* ---------- drawing area ---------- */

function Bubble({ x, y, side }: { x: number; y: number; side?: boolean }) {
  return (
    <g>
      <path d={side ? `M${x + 8} ${y}h43` : `M${x} ${y + 8}v47`} stroke="#8c8c8c" strokeWidth="3" />
      <rect x={x - 5} y={y - 5} width="11" height="11" rx="3" fill="#00e5b4" stroke="#fff" strokeWidth="3" />
    </g>
  )
}

// red or green outlined pipe tag
function Dot({ x, y, red }: { x: number; y: number; red?: boolean }) {
  return <rect x={x - 6} y={y - 6} width="13" height="13" rx="4" fill={red ? '#00f000' : '#ffff00'} stroke={red ? '#f00' : '#4f9a5c'} strokeWidth="3" />
}

function RoomTag({ x, y, w = 24 }: { x: number; y: number; w?: number }) {
  return (
    <g>
      <rect x={x - w / 2} y={y - 12} width={w} height="9" fill="#0f0" />
      <rect x={x - 8} y={y - 2} width="18" height="14" fill="none" stroke="#f00" strokeWidth="3" />
      <rect x={x - 7} y={y - 4} width="12" height="18" fill="#ff0" />
      <rect x={x - 7} y={y + 14} width="14" height="5" fill="#ff0" />
      <rect x={x + 4} y={y + 1} width="7" height="4" fill="#46a0dc" />
    </g>
  )
}

function Rad({ x, y, up }: { x: number; y: number; up?: boolean }) {
  return up ? (
    <g><rect x={x - 4} y={y - 16} width="9" height="33" fill="#0ff" /><rect x={x - 8} y={y - 3} width="4" height="8" fill="#1ac4ff" /></g>
  ) : (
    <g><rect x={x - 16} y={y - 4} width="33" height="9" fill="#0ff" /><rect x={x - 5} y={y - 9} width="10" height="5" fill="#1ac4ff" /></g>
  )
}

function StairsAndShaft({ x }: { x: number }) {
  return (
    <g transform={`translate(${x} 0)`} fill="none" stroke="#8c8c8c" strokeWidth="3">
      <path d="M0 165v-32h101v32" />
      <path d="M27 248v-94h49v94" />
      <path d="M12 180h80M12 189h80M12 198h80M12 208h80M12 217h80M12 227h80M12 237h80M12 247h80" strokeWidth="2" />
      <rect x="46" y="172" width="12" height="82" fill="#222830" />
      <path d="M14 220l30-34" strokeDasharray="3 4" />
      <path d="M12 320h50v8H12M62 325v-10c2-14 12-18 24-20v30h8" />
      <path d="M36 273h42v6H48v8H36z" fill="#00e5b4" stroke="none" />
      <rect x="52" y="156" width="18" height="7" fill="#19c8a0" stroke="none" />
      <path d="M14 435h48v60H10M18 440h34v40H18zM24 486h18" />
      <path d="M10 492h45v-54" stroke="#0000f0" strokeWidth="4" />
      <path d="M68 437c0 18 10 28 24 30v-30" />
    </g>
  )
}

function WestWing({ tags }: { tags?: boolean }) {
  return (
    <g fill="none" shapeRendering="crispEdges">
      {[142, 280, 436, 529, 625].map((x) => <Bubble key={x} x={x} y={58} />)}
      {[179, 315, 349, 430, 598].map((y) => <Bubble key={y} x={58} y={y} side />)}

      {/* outer walls */}
      <path d="M143 166v446" stroke="#8c8c8c" strokeWidth="13" />
      <path d="M143 325v100M143 460v90" stroke="#222830" strokeWidth="5" strokeDasharray="12 7" />
      <path d="M137 178h488" stroke="#8c8c8c" strokeWidth="12" />
      <path d="M150 178h75M330 178h50M455 178h150" stroke="#d0d0d0" strokeWidth="3" strokeDasharray="60 9 12 9" />
      <path d="M150 175h120M290 182h140" stroke="#222830" strokeWidth="2" />
      <path d="M137 600h575" stroke="#8c8c8c" strokeWidth="15" />
      <path d="M150 600h560" stroke="#222830" strokeWidth="5" strokeDasharray="20 6 30 9" />
      <path d="M160 594h120M300 606h120M450 594h60M545 606h60" stroke="#c8c8c8" strokeWidth="2" />
      <path d="M289 612v28h142v-28" stroke="#8c8c8c" strokeWidth="7" />

      {/* toilets */}
      <path d="M148 225h110v16H148zM148 249h110v14H148z" fill="#8c8c8c" />
      <path d="M195 210h12v30h-12zM222 210h12v30h-12zM249 210h12v30h-12zM150 225h16v14h-16zM195 262h12v24h-12zM222 262h12v24h-12zM249 262h12v24h-12z" fill="#8c8c8c" />
      <path d="M173 208v78" stroke="#c8c8c8" strokeWidth="5" />
      <path d="M148 247h110" stroke="#b8b8b8" strokeWidth="3" />
      <path d="M256 244h84M256 262h84" stroke="#8c8c8c" strokeWidth="9" />
      <path d="M262 256h76" stroke="#c8c8c8" strokeWidth="4" strokeDasharray="4 12" />
      <path d="M285 190h84M380 190h50" stroke="#8c8c8c" strokeWidth="8" strokeDasharray="10 3" />
      <path d="M376 184v62M405 184v62" stroke="#8c8c8c" strokeWidth="9" />
      <path d="M374 184v62M404 184v62" stroke="#c8c8c8" strokeWidth="3" />
      <path d="M340 240v40M345 238c0-12 10-20 22-20M342 285c-16 4-28 10-28 22h28M382 318c2-14 8-26 22-28v24" stroke="#8c8c8c" strokeWidth="3" />
      <path d="M418 278h16v34h-16z" fill="#c8c8c8" />
      <path d="M424 284v6M430 292v6M424 300v6" stroke="#222" strokeWidth="4" />

      {/* corridor and room walls */}
      <path d="M148 311h140M288 316h92M402 316h32M148 428h140M288 468h116M428 470h10M148 434h138" stroke="#8c8c8c" strokeWidth="5" />
      <path d="M292 316h86M288 470h116" stroke="#c8c8c8" strokeWidth="3" />
      <path d="M150 318h138M148 425h138" stroke="#0000f0" strokeWidth="3" />
      <path d="M437 184v166M437 428v170" stroke="#b8b8b8" strokeWidth="9" />
      <path d="M437 184v96" stroke="#8c8c8c" strokeWidth="3" />
      <path d="M284 464v130" stroke="#b8b8b8" strokeWidth="6" />
      <path d="M440 349h140" stroke="#c8c8c8" strokeWidth="7" />
      <path d="M438 427h18M478 427h142" stroke="#b8b8b8" strokeWidth="7" />
      <path d="M580 349c2 34 44 34 46 6M434 425c0-32 44-32 44 2M257 437c2 18 12 24 28 26M406 470c0 14 8 24 22 26v-26" stroke="#8c8c8c" strokeWidth="3" />
      <path d="M604 340h18v14h-18z" fill="#c8c8c8" />

      {/* structural columns */}
      <path d="M140 166v16M142 558v52M440 184v92M436 320v32M436 426v18M438 560v50M620 184v156M620 424v184" stroke="#0000f0" strokeWidth="4" />
      <path d="M137 320h12M434 350h22M516 350h30M516 428h30M276 178h14M430 170h12M526 166v16M532 594v20M285 596v10" stroke="#0000f0" strokeWidth="5" />

      {/* stairs */}
      <path d="M204 318v108M213 318v108M221 318v108M230 318v108M238 318v108M247 318v108M255 318v108M264 318v108M272 318v108" stroke="#8c8c8c" strokeWidth="3" />
      <path d="M172 322v78h100M172 344h100M220 366l30-44" stroke="#8c8c8c" strokeWidth="3" />
      <path d="M196 367h82v9h-82z" fill="#222830" stroke="#a8a8a8" strokeWidth="3" />
      <path d="M174 366h16M294 366h16" stroke="#19c8a0" strokeWidth="6" />

      {/* heating lines */}
      <path d="M280 184l-6 14M152 300l10 30M150 440l20 30M148 586l34-12M284 588l30-18M437 588l28-20M620 592l-16-28M620 592l24-20M442 186l22 14M620 186l-20 16M150 592h34M284 592h40M440 592h30M590 590h30" stroke="#f00" strokeWidth="3" />
      <Rad x={265} y={202} /><Rad x={170} y={294} up /><Rad x={173} y={341} /><Rad x={170} y={481} up />
      <Rad x={194} y={574} /><Rad x={326} y={569} /><Rad x={473} y={566} /><Rad x={594} y={562} /><Rad x={660} y={571} />
      <Rad x={478} y={204} /><Rad x={592} y={206} /><Rad x={418} y={256} up />
      <path d="M462 187h28M578 187h26M160 322h20M312 590h28M186 590h18M462 590h24M572 590h24" stroke="#0ff" strokeWidth="6" />
      <path d="M150 470v18M258 192h20M458 192h18M590 194h14M190 592h12M318 592h14M466 592h14M576 592h14M150 300v14" stroke="#ff0" strokeWidth="6" />

      <Dot x={268} y={161} /><Dot x={295} y={154} red /><Dot x={448} y={161} /><Dot x={467} y={159} red />
      <Dot x={588} y={159} red /><Dot x={610} y={161} /><Dot x={124} y={320} /><Dot x={120} y={346} red />
      <Dot x={126} y={440} /><Dot x={114} y={453} red /><Dot x={155} y={617} /><Dot x={171} y={629} red />
      <Dot x={266} y={617} /><Dot x={271} y={639} red /><Dot x={419} y={617} /><Dot x={447} y={621} red />
      <Dot x={610} y={620} /><Dot x={631} y={626} red /><Dot x={454} y={225} red /><Dot x={451} y={244} />
      <Dot x={640} y={310} red /><Dot x={640} y={357} />

      {tags && (
        <g>
          <RoomTag x={298} y={210} /><RoomTag x={389} y={214} /><RoomTag x={417} y={208} /><RoomTag x={289} y={279} />
          <RoomTag x={383} y={268} w={12} /><RoomTag x={519} y={264} /><RoomTag x={342} y={385} w={30} />
          <RoomTag x={207} y={498} w={42} /><RoomTag x={363} y={534} w={42} /><RoomTag x={529} y={513} w={26} /><RoomTag x={667} y={532} w={26} />
        </g>
      )}
      <StairsAndShaft x={620} />
    </g>
  )
}

function EastWing() {
  return (
    <g fill="none" shapeRendering="crispEdges">
      {[56, 151, 244, 337, 432, 526].map((x) => <Bubble key={x} x={x} y={58} />)}
      <StairsAndShaft x={53} />
      <path d="M20 178h510M20 600h510" stroke="#8c8c8c" strokeWidth="13" />
      <path d="M20 178h505M20 600h505" stroke="#222830" strokeWidth="5" strokeDasharray="10 5 22 8" />
      <path d="M160 180h360M70 600h440" stroke="#d0d0d0" strokeWidth="3" strokeDasharray="8 24" />
      <path d="M527 166v446" stroke="#8c8c8c" strokeWidth="12" />
      <path d="M527 250v40M527 490v55" stroke="#c8c8c8" strokeWidth="8" />
      <path d="M527 350v80" stroke="#222830" strokeWidth="4" />
      <path d="M56 184v166M56 430v165M150 184v166M150 430v165" stroke="#8c8c8c" strokeWidth="9" />
      <path d="M340 184v166M340 430v165" stroke="#c8c8c8" strokeWidth="7" />
      <path d="M340 184v166M340 430v165" stroke="#222830" strokeWidth="1" />
      <path d="M156 350h146M348 350h124M498 350h24M20 350h34" stroke="#b8b8b8" strokeWidth="7" />
      <path d="M20 427h44M150 427h32M206 427h122M374 427h150" stroke="#b8b8b8" strokeWidth="6" />
      <path d="M302 350c4 34 44 34 48 4M472 350c4 34 44 34 48 4M158 424c2-30 48-30 48 2M328 424c2-30 48-30 48 2M26 376c18 0 30-8 32-22" stroke="#8c8c8c" strokeWidth="3" />
      <path d="M36 340h16v14H36z" fill="#c8c8c8" />
      <path d="M60 166v114M147 166v186M61 430v62M147 426v184M154 250v100M527 166v44M527 426v62M527 548v64M58 596v16M244 166v16M432 166v16M337 166v16M244 596v16M432 596v16M339 596v16M527 334v20" stroke="#0000f0" strokeWidth="5" />
      <path d="M232 348h24M420 348h24M232 430h24M420 430h26M320 430h30M326 350h24" stroke="#0000f0" strokeWidth="5" />
      <path d="M154 186l20 14M340 188l-26 14M520 188l-24 12M50 190l-12 14M498 330l22 18M62 335l30 10M518 420l-8-12M60 592l14-16M54 590L36 566M158 592l18-22M340 588l-40-18M344 590l14-20M520 590l-22-22" stroke="#f00" strokeWidth="3" />
      <Rad x={184} y={205} /><Rad x={301} y={202} /><Rad x={472} y={202} /><Rad x={34} y={204} /><Rad x={500} y={316} up />
      <Rad x={101} y={346} /><Rad x={499} y={408} /><Rad x={88} y={571} /><Rad x={187} y={567} /><Rad x={294} y={569} />
      <Rad x={370} y={567} /><Rad x={487} y={565} /><Rad x={34} y={562} />
      <Dot x={42} y={161} /><Dot x={165} y={161} /><Dot x={185} y={162} red /><Dot x={319} y={159} red /><Dot x={351} y={161} />
      <Dot x={490} y={157} red /><Dot x={515} y={159} /><Dot x={71} y={310} red /><Dot x={71} y={357} /><Dot x={565} y={321} red />
      <Dot x={543} y={346} /><Dot x={545} y={402} red /><Dot x={543} y={423} /><Dot x={42} y={619} /><Dot x={63} y={626} red />
      <Dot x={150} y={622} red /><Dot x={166} y={616} /><Dot x={333} y={627} red /><Dot x={351} y={615} /><Dot x={495} y={620} red /><Dot x={513} y={615} />
    </g>
  )
}

function Drawing() {
  // model space is laid out in screen units with the viewport corner at 324,171
  return (
    <svg className="absolute inset-0 h-full w-full" aria-hidden="true">
      <g transform="translate(-324 -171)">
        <path d="M324 409.500h3000" stroke="#fff" shapeRendering="crispEdges" />
        <rect x="1098.500" y="402.500" width="14" height="13" fill="none" stroke="#fff" />
        <path d="M393 295.500h61" stroke="#0ff" strokeWidth="5" />
        <path d="M454 296h4l10 13M464 307l4 2-1-4" stroke="#0ff" fill="none" />
        <text x="601" y="436" fill="#12e0a4" fontSize="12" fontFamily="Liberation Sans, sans-serif">1. KAT PLANI</text>
        <text x="1090" y="436" textAnchor="end" fill="#12e0a4" fontSize="12" fontFamily="Liberation Sans, sans-serif">KAT PLANI</text>
        <g transform="translate(430 460) scale(.3333)"><WestWing tags /></g>
        <g transform="translate(1035 460) scale(.3333)"><EastWing /></g>
        <g transform="translate(1295 460) scale(.3333)"><WestWing /></g>
        {/* ucs icon */}
        <path d="M339.500 695v49.500H389M335.500 739.500h9v9h-9zM341.500 677l6 6 6-6M347.500 683v7M394.500 730l12 13M406.500 730l-12 13" stroke="#fff" fill="none" />
      </g>
    </svg>
  )
}

function ViewCube() {
  return (
    <svg width="130" height="400" className="absolute top-0 right-0" fontFamily="Liberation Sans, sans-serif">
      <g transform="translate(-1308 -171)">
        <circle cx="1370" cy="238" r="44.500" fill="none" stroke="#4a4d54" strokeWidth="11" />
        <g fill="#b8babd" stroke="#222830" strokeWidth="3" paintOrder="stroke" fontSize="18" fontWeight="700" textAnchor="middle">
          <text x="1370" y="198">N</text>
          <text x="1370" y="291">S</text>
          <text x="1324" y="245">W</text>
          <text x="1416" y="245">E</text>
        </g>
        <rect x="1349.500" y="217.500" width="41" height="41" fill="#b4b4b4" stroke="#8a8a8a" />
        <rect x="1357" y="225" width="26" height="26" fill="#a4a7ae" />
        <text x="1370" y="242" fill="#454c57" fontSize="10" fontWeight="700" fontFamily="Roboto, sans-serif" textAnchor="middle">TOP</text>
        <rect x="1346.500" y="310.500" width="47" height="17" rx="4" fill="#9192a0" stroke="#b0b0bc" />
        <text x="1350" y="323" fill="#53555f" fontSize="11">WCS</text>
        <path d="M1381 316.500h8l-4 5z" fill="none" stroke="#b8bac4" />
        {/* navigation bar */}
        <rect x="1403" y="353" width="32" height="214" rx="3" fill="#83868c" fillOpacity=".6" />
        <g fill="none" stroke="#44484f" strokeWidth="1.300">
          <circle cx="1429" cy="358" r="4" fill="#44484f" stroke="none" />
          <path d="M1427 356l4 4M1431 356l-4 4" stroke="#888" />
          <path d="M1409 383a10 10 0 0 1 10-10h7c3 0 3 2 3 10a10 10 0 0 1-20 0z" />
          <circle cx="1419" cy="383" r="6" />
          <path d="M1414 436c-4-5-6-8-7-10 2-2 4 0 6 3v-9c0-2 3-2 3 0v-3c0-2 3-2 3 0v1c1-2 3-1 3 1v2c1-2 4-1 3 1l1 2c1-2 4-1 3 1l-3 12-2 3h-9z" />
          <path d="M1408 443l14 14M1423 443l-15 14M1408 448v-5h5M1418 443h5v4M1408 453v4h5" />
          <circle cx="1424" cy="457" r="5" /><path d="M1427 461l5 5" strokeWidth="3" />
          <path d="M1417 500v-15h-2l4-5 4 5h-2v15zM1417 488c-11 1-11 8 2 8s14-7 2-8M1412 493l-4 4 5 2" />
        </g>
        <g fill="none" stroke="#5a5e65">
          <path d="M1407.500 523.500h9v7h-9zM1419.500 523.500h9v7h-9zM1408 534.500h20v11h-20zM1413 536l9 4-9 4z" />
        </g>
        <path d="M1416 403h6l-3 3zM1416 473h6l-3 3zM1416 511h6l-3 3z" fill="#44484f" />
      </g>
    </svg>
  )
}

/* ---------- dialog ---------- */

function Box({ title, pos, children }: Kids & { title: string; pos?: string }) {
  return (
    <fieldset className={clsx('min-w-0 rounded-[3px] border border-[#d5dfe5]', pos)}>
      <legend className="ml-[6px] px-[2px] leading-[13px]">{title}</legend>
      {children}
    </fieldset>
  )
}

const field = 'h-5 rounded-[2px] border bg-white px-[2px] outline-none'
const plain = 'border-[#e2e3ea] border-t-[#abadb3]'
const focus = 'border-[#b5cfe7] border-t-[#3d7bad]'
const push = 'rounded-[3px] border border-[#707070] bg-linear-to-b from-[#f4f4f4] to-[#cfcfcf] shadow-[inset_0_0_0_1px_#fcfcfc]'

function Select({ id, value }: { id: string; value: string }) {
  return (
    <div className="relative">
      <select id={id} className={clsx(field, plain, 'w-20 appearance-none')}><option>{value}</option></select>
      <span className="pointer-events-none absolute top-2 right-1"><Caret big color="#000" /></span>
    </div>
  )
}

function Dialog() {
  const [fixed, setFixed] = useState(false)
  const [tab, setTab] = useState('Ayarlar')
  return (
    <div
      role="dialog"
      aria-labelledby="dialog-title"
      className="absolute top-[163px] left-[350px] w-[375px] rounded-[7px] border border-[#0e1014] bg-linear-to-br from-[#55565f] via-[#2b2c36] to-[#3b3c45] px-[5px] pb-[5px] font-[Liberation_Sans,sans-serif] text-[11px] text-black shadow-[inset_0_0_0_1px_#9c9da6,0_0_8px_#000]"
    >
      <div className="flex h-7 items-start pl-[2px]">
        <svg width="16" height="16" className="mt-[5px] shrink-0" aria-hidden="true">
          <rect x=".5" y="1.500" width="15" height="14" fill="#eee" stroke="#888" />
          <rect x="6" y="1" width="8" height="7" fill="#ffc93c" stroke="#c78a10" />
          <rect x="1" y="5" width="4" height="5" fill="#d63a2c" />
          <rect x="6" y="10" width="6" height="4" fill="#3c78d8" />
          <rect x="1" y="11" width="4" height="4" fill="#bbb" />
        </svg>
        <h2 id="dialog-title" className="mt-1 ml-1 rounded-[8px] bg-white/25 px-px font-[Roboto,sans-serif] text-[12px] leading-[18px] shadow-[0_0_8px_4px_#ffffff40]">Merkezi Sistem Kolon Şeması</h2>
        <button aria-label="Kapat" className="ml-auto flex h-5 w-[49px] items-center justify-center rounded-b-[4px] border border-t-0 border-[#8b8c94] bg-linear-to-b from-[#5b5c66] to-[#34353f]">
          <Icon w={10} h={9}><path d="M0 0h3l2 2.500L7 0h3L6.800 4.500 10 9H7L5 6.500 3 9H0l3.200-4.500z" fill="#f4f4f4" stroke="none" /></Icon>
        </button>
      </div>
      <div className="border border-[#b8b9c0] bg-[#f0f0f0] p-px pt-0">
        <div className="flex items-end pl-[2px]">
          {['Kolon Listesi', 'Ayarlar', 'Çizim'].map((t) => (
            <button
              key={t}
              onClick={() => setTab(t)}
              className={clsx(
                t === tab ? tabOn : tabOff,
                t === tab ? 'h-5 pb-[2px]' : 'h-[18px]',
                t === 'Kolon Listesi' ? 'w-[70px] pl-[5px]' : t === 'Ayarlar' ? 'w-[47px] pl-[6px]' : 'w-[38px] pl-1',
              )}
            >
              {t}
            </button>
          ))}
        </div>
        <div className="flex border border-[#8b8d96] bg-white pt-[10px] pr-px pb-[9px] pl-[13px]">
          <Box title="Kat Sıralaması" pos="w-[133px] shrink-0">
            <div className="mt-[5px] flex px-[9px] leading-[14px]"><span>Kat Adı</span><span className="ml-[7px]">|</span><span className="ml-[9px]">Kat Yük</span></div>
            <ul role="listbox" aria-label="Kat Sıralaması" className="mt-[3px] ml-[2px] h-[213px] w-[126px] border border-[#828790] py-[2px] pl-[3px] leading-[13px]">
              {floors.map((f) => (
                <li key={f.name} role="option" aria-selected="false" className="flex">
                  <span className="w-[46px]">{f.name}</span>
                  <span>{f.height}</span>
                </li>
              ))}
            </ul>
            <div className="mt-3 flex items-center pl-[7px]">
              <label htmlFor="kat" className="w-[78px]">Kat Yüksekliği</label>
              <input id="kat" defaultValue="500" className={clsx(field, plain, 'w-[41px]')} />
            </div>
            <label className="mt-2 flex h-[14px] items-center gap-1 pl-2">
              <input
                type="checkbox"
                checked={fixed}
                onChange={() => setFixed(!fixed)}
                className="size-[13px] appearance-none border border-[#8e8f8f] bg-linear-to-br from-[#cfd2d6] to-white shadow-[inset_0_0_0_2px_#f4f4f4] checked:bg-[#3b6ea5]"
              />
              Yükseklikler Sabit
            </label>
            <button className={clsx(push, 'mt-[6px] mb-[5px] ml-[9px] h-[18px] w-[108px]')}>Yükseklik Ayarla</button>
          </Box>
          <div className="ml-[6px] flex min-w-0 flex-1 flex-col">
            <Box title="Kolon Çizim Yeri" pos="mr-1 h-[82px]">
              <div className="flex items-center pl-[10px]">
                <span className="w-[70px]">Nokta Seç</span>
                <button className={clsx(push, 'h-[21px] w-[43px]')}>...</button>
              </div>
              <div className="mt-2 flex items-center pl-[10px]">
                <label htmlFor="px" className="w-[18px]">X</label>
                <input id="px" defaultValue="1604,7284" className={clsx(field, focus, 'w-[59px]')} />
                <label htmlFor="py" className="ml-[25px] w-[18px]">Y</label>
                <input id="py" defaultValue="823,282" className={clsx(field, focus, 'w-[59px]')} />
              </div>
            </Box>
            <Box title="Kazan Ayarları" pos="mt-2 mr-1 ml-[2px] h-[100px]">
              <div className="mt-[13px] flex items-center pl-[3px]">
                <label htmlFor="giris" className="w-[108px]">Kazan Giriş Aded</label>
                <input id="giris" defaultValue="2" className={clsx(field, plain, 'w-[77px]')} />
              </div>
              <div className="mt-[11px] flex items-start pl-[3px]">
                <label htmlFor="aciklik" className="w-[108px] pt-1 leading-[13px]">Kazan Girişleri Arası Açıklık (cm):</label>
                <input id="aciklik" defaultValue="1000" className={clsx(field, plain, 'w-[78px]')} />
              </div>
            </Box>
            <Box title="Diğer Ayarlar" pos="mt-[17px] ml-1 h-[125px]">
              <div className="mt-[2px] grid grid-cols-[107px_80px] gap-y-[10px] pl-[2px] leading-[13px]">
                <label htmlFor="ohac" className="h-5 pt-[3px]">OHAC Konulsun mu?</label>
                <Select id="ohac" value="Evet" />
                <label htmlFor="boru" className="h-5 w-[80px]">Kat Altı Boru Mesafesi</label>
                <input id="boru" defaultValue="100" className={clsx(field, plain, 'w-20')} />
                <label htmlFor="isim" className="h-5 pt-1 whitespace-nowrap">Kolon İsimleri Nereye<br />Konulsun?</label>
                <Select id="isim" value="En üst kata" />
              </div>
            </Box>
          </div>
        </div>
      </div>
    </div>
  )
}

function Workspace() {
  return (
    <main className="ml-1 flex min-w-0 flex-1 flex-col">
      <div className="mt-[6px] flex min-h-0 flex-1 flex-col border-r-2 border-b border-l-2 border-[#a8a8a8] border-r-[#e8e8e8] border-b-white">
        <div className="relative min-h-0 flex-1 overflow-hidden bg-[#222830]">
          <Drawing />
          <ViewCube />
          <p className="absolute top-[6px] left-1 flex gap-[5px] leading-[14px] text-[#dcdcdc]"><span>[−]</span><span>[Top]</span><span>[2D Wireframe]</span></p>
        </div>
        <div className="flex h-[17px] shrink-0 items-center border-t border-[#888] bg-[#efefef] font-[Liberation_Sans,sans-serif] text-[11px] text-black">
          {['M4 1v9M11 1L5 5.500l6 4.500z', 'M10 1L5 5.500l5 4.500z', 'M5 1l5 4.500L5 10z', 'M4 1l6 4.500L4 10zM11 1v9'].map((d, i) => (
            <button key={i} aria-label={['First', 'Previous', 'Next', 'Last'][i]} className="flex h-full w-[15px] items-center justify-center border-r border-[#999] bg-[#f4f4f4]">
              <Icon w={14} h={11}><path d={d} fill="#555" stroke="#555" /></Icon>
            </button>
          ))}
          <div className="relative flex h-full w-[112px]">
            <svg width="112" height="16" className="absolute inset-0" aria-hidden="true">
              <path d="M2 0h53l-5 15H8z" fill="#222830" />
              <path d="M54 0h53l-6 15H48z" fill="#fff" stroke="#888" />
            </svg>
            <button className="relative w-[46px] pl-3 text-left text-white">Model</button>
            <button className="relative ml-3">Layout1</button>
          </div>
        </div>
      </div>
      <div className="mt-1 flex h-[56px] shrink-0">
        <div className="w-4 shrink-0 rounded-tl-[4px] bg-[#a3a3a3] pt-[3px] pl-[2px]">
          <div className="h-[3px] w-[11px] border-y border-dotted border-black" />
        </div>
        <div className="flex flex-1 flex-col bg-[#c8c8c8] font-[DejaVu_Sans_Mono,monospace] text-[12px] text-black">
          <p className="px-px leading-[15px]">Command: En alt katın sol alt köşesine tıklayın:</p>
          <p className="px-px leading-[15px]">Command:</p>
          <div className="mt-auto flex h-[18px] items-center border-t border-[#999] bg-white pt-[2px]">
            <label htmlFor="cmd" className="px-px">Command:</label>
            <input id="cmd" className="h-[14px] flex-1 outline-none" />
          </div>
        </div>
      </div>
      <Dialog />
    </main>
  )
}

/* ---------- status bar and taskbar ---------- */

const toggles: { label: string; on?: boolean; art: ReactNode }[] = [
  { label: 'Infer', art: <><path d="M1 6.500h10M6.500 1v11M4 5h5v3H4z" /><path d="M11.500 15v-4h3v3h-3" stroke="#1b6ac0" strokeWidth="1.500" /></> },
  { label: 'Snap', art: <path d="M2 3.500h12M2 6.500h12M2 9.500h12M2 12.500h12" strokeDasharray="1 2" /> },
  { label: 'Grid', art: <><path d="M.5 .5h15v15H.5z" fill="#fff" /><path d="M3.500 0v16M6.500 0v16M9.500 0v16M12.500 0v16M0 3.500h16M0 6.500h16M0 9.500h16M0 12.500h16" /></> },
  { label: 'Ortho', on: true, art: <><path d="M1.500 0v14.500H16" strokeWidth="1.500" /><path d="M2 9.500h4.500V14" /></> },
  { label: 'Polar', art: <path d="M12 8a5 5 0 1 0-2 4M6 8.500h9M6 8l7-6" strokeWidth="1.300" /> },
  { label: 'Object Snap', on: true, art: <><path d="M2.500 3.500h12v11h-12z" fill="#f4f4f4" /><circle cx="2.500" cy="3" r="1.800" stroke="#e0501c" fill="#fff" /></> },
  { label: '3D Snap', art: <><path d="M4.500 4.500l3-3h8v8l-3 3h-8z" fill="#e8edf5" /><path d="M4.500 4.500h8v8M12.500 4.500l3-3" /><circle cx="2.500" cy="13" r="1.800" stroke="#e0501c" fill="#fff" /></> },
  { label: 'Tracking', art: <path d="M13 2L3 12.500h11" strokeWidth="1.300" /> },
  { label: 'Dynamic UCS', on: true, art: <><path d="M1.500 1v13.500H15M2 14l9-9M0 3l1.500-2L3 3M13 13l2 1.500L13 16" /><path d="M9 3l4-3 2 2-3 4z" fill="#f7a823" stroke="#d9740f" /></> },
  { label: 'Dynamic Input', on: true, art: <><path d="M1 7.500h9M5.500 3v9" strokeWidth="1.500" stroke="#000" /><path d="M8.500 8.500h6v3h-6z" fill="#fff" stroke="#000" /></> },
  { label: 'Lineweight', art: <><path d="M8 8.500h7" stroke="#000" /><path d="M1 8.500h8M8.500 2v12" strokeWidth="2" stroke="#000" /></> },
  { label: 'Transparency', on: true, art: <><path d="M.5 .5h15v15H.5z" fill="#e4eff8" stroke="#1b6ac0" /><path d="M2 3h12M2 7h12M2 11h12" stroke="#8cb4d8" strokeWidth="2" strokeDasharray="2 2" /><path d="M4 5h11M4 9h11M4 13h11" stroke="#8cb4d8" strokeWidth="2" strokeDasharray="2 2" /></> },
  { label: 'Quick Properties', art: <><path d="M4.500 3.500h8v10h-8z" fill="#fff" stroke="#000" /><path d="M6 6.500h5M6 8.500h5M6 10.500h5" strokeDasharray="1 1 3 0" stroke="#000" /></> },
  { label: 'Selection Cycling', on: true, art: <><path d="M3.500 0v7M0 3.500h7" /><path d="M5.500 5.500h6v6h-6z" fill="#fff" /><path d="M9 9h6v6H9z" fill="#86c46a" stroke="#2a6a2a" /></> },
]

const cell = 'flex h-full items-center justify-center border-r border-[#555] bg-linear-to-b from-[#b8b8b8] to-[#a0a0a0]'

function Compass({ stroke = '#3f444b', fill = '#e8e8e8' }: { stroke?: string; fill?: string }) {
  return <path d="M8 .5l2 7 5.500 5-1 1.500-4.500-1.500-2-1-2 1L1.500 14l-1-1.500L6 7.500z" fill={fill} stroke={stroke} />
}

function StatusBar() {
  return (
    <footer className="flex h-[22px] shrink-0 items-stretch border-y border-black bg-linear-to-b from-[#999] to-[#7c7c7c] font-[Liberation_Sans,sans-serif] text-[11px] text-black">
      <div className="flex w-[158px] items-center border-r border-[#555] pl-3">9133.19, -355.61 , 0.00</div>
      {toggles.map((t) => (
        <button key={t.label} aria-label={t.label} aria-pressed={!!t.on} className={clsx('flex w-[22px] shrink-0 items-center justify-center border-r border-[#555]', t.on ? 'bg-linear-to-b from-[#d6eef5] to-[#92ccdc]' : 'bg-linear-to-b from-[#b8b8b8] to-[#a0a0a0]')}>
          <Icon>{t.art}</Icon>
        </button>
      ))}
      <div className="ml-auto flex border-l border-[#555]">
        <button className={clsx(cell, 'w-11')}>MODEL</button>
        <button aria-label="Layout" className={clsx(cell, 'w-[22px]')}><Icon><path d="M2.500 .5h11v11h-11z" fill="#f4f4f4" /><path d="M5 3v6h6z" /><path d="M0 14h16" strokeWidth="2" /></Icon></button>
        <button aria-label="Quick View" className={clsx(cell, 'w-[22px]')}><Icon><path d="M.5 2.500h7v6h-7zM8.500 2.500h7v6h-7z" fill="#f4f4f4" /><path d="M0 11.500h7M9 11.500h7" strokeWidth="2" /></Icon></button>
        <button className={clsx(cell, 'ml-3 w-[51px] gap-[3px] border-l')}><Icon><Compass /></Icon>1:1<Caret big color="#000" /></button>
        <button aria-label="Annotation visibility" className={clsx(cell, 'w-[22px]')}><Icon><Compass /><circle cx="13" cy="9" r="2" fill="#ffc93c" stroke="#e0701c" /></Icon></button>
        <button aria-label="Auto scale" className={clsx(cell, 'w-[22px]')}><Icon><Compass stroke="#888" fill="#bbb" /></Icon></button>
        <button aria-label="Workspace" className={clsx(cell, 'ml-[6px] w-[22px] border-l')}><Icon><circle cx="8" cy="8" r="6" strokeWidth="3" strokeDasharray="2.400 2.300" /><circle cx="8" cy="8" r="5" fill="#ddd" /><circle cx="8" cy="8" r="2" fill="#fff" /></Icon></button>
        <button aria-label="Lock" className={clsx(cell, 'w-[22px]')}><Icon><path d="M.5 7.500h9v7h-9z" fill="#f4f4f4" /><path d="M7.500 7V4c0-4 7-4 7 0v3h-2V4.500c0-1.500-3-1.500-3 0V7" fill="#ddd" /><path d="M5 9v4" /></Icon></button>
        <button aria-label="Hardware" className={clsx(cell, 'w-[22px]')}><Icon><path d="M.5 3.500h13v6H.5z" fill="#8592a0" stroke="#66707c" /><path d="M2 2h11M2 11h8" strokeDasharray="1 1" strokeWidth="2" stroke="#66707c" /><circle cx="12.500" cy="9" r="2.500" fill="#cfe5f6" stroke="#2a7cc4" /><path d="M12 12h1v3h-1z" stroke="#2a7cc4" /></Icon></button>
        <div className="flex w-[52px] items-center gap-[6px] bg-[#8c8c8c] pl-[5px]">
          <Icon><path d="M2.500 1.500h10v7h-10z" fill="#3b6ea5" /><path d="M1.500 6.500h10v7h-10z" fill="#f6d84a" /><path d="M6 11l3 3 6-8" stroke="#2fa02f" strokeWidth="2.500" /></Icon>
          <Icon><path d="M8 .8c3.500 0 5 2.500 4.500 5C12 8 10 9 10 11.500H6C6 9 4 8 3.500 5.800 3 3.300 4.500 .8 8 .8z" fill="#ffe79a" stroke="#9a7a2a" /><path d="M6.500 13h3M7 15h2" strokeWidth="1.500" /></Icon>
        </div>
        <button aria-label="Tray menu" className={clsx(cell, 'w-[11px]')}><Caret color="#000" /></button>
        <button aria-label="Clean Screen" className={clsx(cell, 'w-[22px]')}><Icon><path d="M.5 2.500h14v11H.5z" fill="#fff" /><path d="M1 4h13" stroke="#4a5a78" strokeWidth="3" /></Icon></button>
      </div>
    </footer>
  )
}

function Taskbar() {
  const win = 'h-full shrink-0 border-t border-r border-[#d8c8c0] border-r-[#50302c] bg-linear-to-r from-[#d8ccb8] to-[#6e4048]'
  return (
    <div className="flex h-2 shrink-0 overflow-hidden bg-linear-to-r from-[#2c0a0a] via-[#6b4526] to-[#3a1010]">
      <svg width="116" height="8" className="shrink-0" aria-hidden="true">
        <ellipse cx="27" cy="12" rx="17" ry="12" fill="#8fb4cc" stroke="#d6e6ee" />
        <path d="M80 8c6-8 18-6 18-2" stroke="#f0c030" strokeWidth="4" fill="none" />
      </svg>
      {[0, 1, 2, 3, 4, 5, 6].map((i) => (
        <div key={i} className={clsx(win, 'w-[97px]')}>
          <svg width="40" height="7" className="block"><path d="M8 2h10l4 3h14v3H8z" fill="#f4e6a0" /></svg>
        </div>
      ))}
      <div className={clsx(win, 'ml-[60px] w-24')}><svg width="60" height="7" className="block"><circle cx="24" cy="12" r="10" fill="#6db4e0" stroke="#1c3c5c" strokeWidth="2" /></svg></div>
      <div className={clsx(win, 'ml-[3px] w-24')}><div className="ml-1 h-full w-8 bg-[#6a2590]" /></div>
      <div className={clsx(win, 'ml-[3px] w-24')}><svg width="30" height="7" className="block"><path d="M12 7l4-5 5 5z" fill="#f05050" /></svg></div>
      <div className={clsx(win, 'ml-[3px] w-24')} />
      <div className={clsx(win, 'ml-auto w-[14px]')} />
    </div>
  )
}

export default function App() {
  return (
    <div className="flex h-screen flex-col overflow-hidden bg-[#696969] font-[Roboto,sans-serif] text-[12px]">
      <Header />
      <Ribbon />
      <div className="flex min-h-0 flex-1">
        <Palette />
        <div className="relative flex min-w-0 flex-1">
          <Workspace />
        </div>
      </div>
      <StatusBar />
      <Taskbar />
    </div>
  )
}
